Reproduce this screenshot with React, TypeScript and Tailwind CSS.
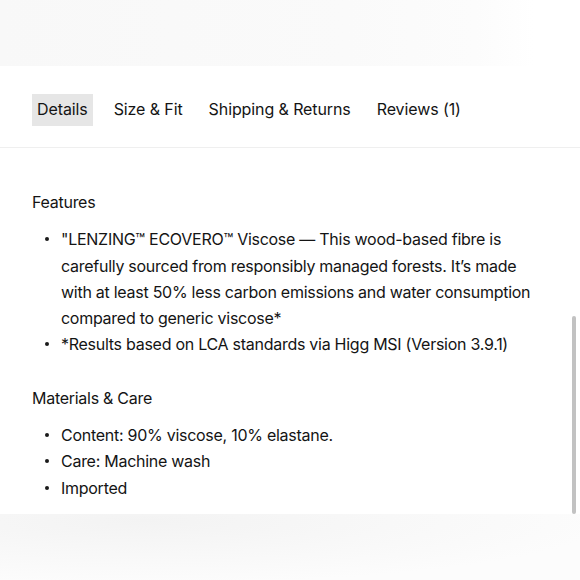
import React from "react";

const tabs = ["Details", "Size & Fit", "Shipping & Returns", "Reviews (1)"];

function Item({ children }: { children: React.ReactNode }) {
  return (
    <li className="flex">
      <span className="w-[29px] shrink-0 pl-[13px] pt-[11px]">
        <span className="block w-[4px] h-[4px] rounded-full bg-[#1a1a1a]" />
      </span>
      <span>{children}</span>
    </li>
  );
}

export default function App() {
  return (
    <div
      className="relative w-full h-[580px] overflow-hidden bg-white flex flex-col text-[#141414] text-[16px] tracking-[-0.27px]"
      style={{ fontFamily: "Inter, 'Noto Sans', sans-serif" }}
    >
      <div className="h-[66px] shrink-0 bg-[linear-gradient(90deg,#f8f8f8_0%,#fafafa_60%,#fcfcfc_82%,#ffffff_92%)]" />
      <div className="shrink-0 pt-[28px] pb-[21px] px-[32px] border-b border-[#efefef] flex gap-4 tracking-[-0.1px]">
        {tabs.map((t, i) => (
          <div
            key={t}
            className={
              "h-[32px] px-[5px] pb-[3px] flex items-center leading-none " +
              (i === 0 ? "bg-[#e6e6e6]" : "")
            }
          >
            {t}
          </div>
        ))}
      </div>
      <div className="flex-1 overflow-hidden px-[32px] pt-[41px] leading-[26.3px]">
        <div>Features</div>
        <ul className="mt-[11px]">
          <Item>
            "LENZING™ ECOVERO™ Viscose — This wood-based fibre is carefully sourced from responsibly managed forests. It’s made with at least 50% less carbon emissions and water consumption compared to generic viscose*
          </Item>
          <Item>*Results based on LCA standards via Higg MSI (Version 3.9.1)</Item>
        </ul>
        <div className="mt-[27px]">Materials &amp; Care</div>
        <ul className="mt-[11px]">
          <Item>Content: 90% viscose, 10% elastane.</Item>
          <Item>Care: Machine wash</Item>
          <Item>Imported</Item>
        </ul>
      </div>
      <div className="h-[66px] shrink-0 bg-[radial-gradient(ellipse_at_25%_10%,#f3f3f3_0%,#f8f8f8_40%,#fcfcfc_75%)]" />
      <div className="absolute left-[572px] top-[316px] w-[4px] h-[198px] rounded-full bg-[#c2c2c2]" />
    </div>
  );
}
